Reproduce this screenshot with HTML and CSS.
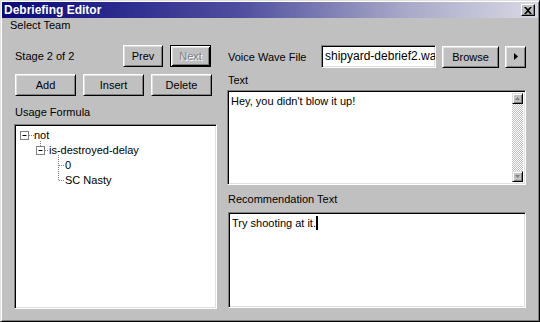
FILE: index.html
```html
<!DOCTYPE html>
<html lang="en">
<head>
    <meta charset="UTF-8">
    <title>Debriefing Editor</title>
    <link rel="stylesheet" href="styles.css">
</head>
<body>
    <div class="window">
        <div class="titlebar">
            <span class="title">Debriefing Editor</span>
            <span class="close">
                <svg width="8" height="7" viewBox="0 0 8 7"><path d="M0 0h2l2 2 2-2h2L5 3.5 8 7H6L4 5 2 7H0l3-3.5z" fill="#000"/></svg>
            </span>
        </div>
        <div class="menu"><span>Select Team</span></div>

        <div class="main">
            <div class="left">
                <div class="row stage">
                    <span class="stage-label">Stage 2 of 2</span>
                    <button class="btn prev">Prev</button>
                    <button class="btn next" disabled>Next</button>
                </div>
                <div class="row actions">
                    <button class="btn">Add</button>
                    <button class="btn">Insert</button>
                    <button class="btn">Delete</button>
                </div>
                <div class="label formula-label">Usage Formula</div>
                <div class="tree sunken">
                    <svg class="tree-lines" width="80" height="70">
                        <g stroke="#808080" stroke-dasharray="1 1" fill="none">
                            <path d="M12 8.5h5"/>
                            <path d="M23.5 14v5"/>
                            <path d="M28 23.5h4"/>
                            <path d="M41.5 28v26"/>
                            <path d="M42 38.5h5M42 53.5h5"/>
                        </g>
                        <rect x="3.5" y="4.5" width="8" height="8" fill="#fff" stroke="#808080"/>
                        <path d="M5.5 8.5h4" stroke="#000"/>
                        <rect x="19.5" y="19.5" width="8" height="8" fill="#fff" stroke="#808080"/>
                        <path d="M21.5 23.5h4" stroke="#000"/>
                    </svg>
                    <div class="node lvl0">not</div>
                    <div class="node lvl1">is-destroyed-delay</div>
                    <div class="node lvl2">0</div>
                    <div class="node lvl2">SC Nasty</div>
                </div>
            </div>

            <div class="right">
                <div class="row wave">
                    <span class="wave-label">Voice Wave File</span>
                    <div class="field sunken">shipyard-debrief2.wa</div>
                    <button class="btn browse">Browse</button>
                    <button class="btn play">
                        <svg width="4" height="7" viewBox="0 0 4 7"><path d="M0 0l4 3.5L0 7z" fill="#000"/></svg>
                    </button>
                </div>
                <div class="label text-label">Text</div>
                <div class="memo sunken">
                    <div class="memo-text">Hey, you didn't blow it up!</div>
                    <div class="scrollbar">
                        <span class="sb-btn">
                            <svg width="5" height="3" viewBox="0 0 5 3"><path d="M0 3l2.5-3L5 3z" fill="#808080"/></svg>
                        </span>
                        <span class="sb-track"></span>
                        <span class="sb-btn">
                            <svg width="5" height="3" viewBox="0 0 5 3"><path d="M0 0l2.5 3L5 0z" fill="#808080"/></svg>
                        </span>
                    </div>
                </div>
                <div class="label rec-label">Recommendation Text</div>
                <div class="memo rec sunken">
                    <div class="memo-text">Try shooting at it.<span class="caret"></span></div>
                </div>
            </div>
        </div>
    </div>
</body>
</html>
```

FILE: styles.css
```css
body {
    margin: 0;
    background: #c0c0c0;
    font-family: "Liberation Sans", Arial, sans-serif;
    font-size: 11px;
    color: #000;
}
.window {
    width: 540px;
    height: 322px;
    box-sizing: border-box;
    padding: 1px;
    border: 1px solid;
    border-color: #dfdfdf #000 #000 #dfdfdf;
    box-shadow: inset 1px 1px #fff, inset -1px -1px #808080;
    background: #c0c0c0;
}
.titlebar {
    height: 16px;
    display: flex;
    align-items: center;
    justify-content: space-between;
    padding: 0 3px 0 2px;
    background: linear-gradient(to right, #08087c, #5050a0 45%, #a8a8c8 75%, #d8d8e4);
}
.title {
    color: #fff;
    font-weight: bold;
    font-size: 12px;
}
.close {
    width: 14px;
    height: 12px;
    box-sizing: border-box;
    display: flex;
    align-items: center;
    justify-content: center;
    background: #c0c0c0;
    border: 1px solid;
    border-color: #fff #000 #000 #fff;
    box-shadow: inset -1px -1px #808080;
}
.menu {
    height: 14px;
    line-height: 14px;
    padding-left: 8px;
}
.main {
    display: flex;
    gap: 10px;
    padding: 13px 0 0 12px;
}
.left {
    width: 203px;
    display: flex;
    flex-direction: column;
}
.right {
    width: 299px;
    display: flex;
    flex-direction: column;
}
.row {
    display: flex;
    align-items: center;
}
.btn {
    font: inherit;
    color: #000;
    height: 22px;
    padding: 0;
    box-sizing: border-box;
    background: #c0c0c0;
    border: 1px solid;
    border-color: #fff #000 #000 #fff;
    box-shadow: inset 1px 1px #dfdfdf, inset -1px -1px #808080;
}
.stage {
    padding-left: 1px;
}
.stage-label {
    flex: 1;
}
.prev {
    width: 40px;
}
.next {
    width: 41px;
    margin: 0 6px 0 7px;
    color: #808080;
    text-shadow: 1px 1px #fff;
    border-color: #000;
    box-shadow: inset 1px 1px #fff, inset -1px -1px #000, inset 2px 2px #dfdfdf, inset -2px -2px #808080;
}
.actions {
    margin-top: 7px;
    padding-left: 1px;
    gap: 7px;
}
.actions .btn {
    width: 61px;
}
.label {
    height: 13px;
    line-height: 13px;
}
.formula-label {
    margin: 10px 0 5px 1px;
}
.sunken {
    box-sizing: border-box;
    background: #fff;
    border: 1px solid;
    border-color: #808080 #fff #fff #808080;
    box-shadow: inset 1px 1px #000, inset -1px -1px #dfdfdf;
}
.tree {
    position: relative;
    height: 185px;
    padding: 3px 2px;
}
.tree-lines {
    position: absolute;
    left: 2px;
    top: 2px;
}
.node {
    height: 15px;
    line-height: 15px;
    position: relative;
}
.lvl0 {
    padding-left: 17px;
}
.lvl1 {
    padding-left: 32px;
}
.lvl2 {
    padding-left: 48px;
}
.wave {
    height: 23px;
}
.wave-label {
    flex: 1;
    padding-left: 1px;
}
.field {
    width: 115px;
    height: 23px;
    line-height: 19px;
    padding: 1px 3px;
    font-size: 12px;
    white-space: nowrap;
    overflow: hidden;
}
.browse {
    width: 57px;
    margin: 0 6px;
}
.play {
    width: 21px;
    display: flex;
    align-items: center;
    justify-content: center;
}
.text-label {
    margin: 6px 0 3px 1px;
}
.memo {
    height: 95px;
    display: flex;
    padding: 2px;
}
.memo-text {
    flex: 1;
    padding: 1px 0 0 1px;
    font-size: 11px;
    line-height: 14px;
}
.scrollbar {
    width: 11px;
    display: flex;
    flex-direction: column;
}
.sb-btn {
    height: 11px;
    box-sizing: border-box;
    display: flex;
    align-items: center;
    justify-content: center;
    background: #c0c0c0;
    border: 1px solid;
    border-color: #dfdfdf #000 #000 #dfdfdf;
    box-shadow: inset 1px 1px #fff, inset -1px -1px #808080;
}
.sb-track {
    flex: 1;
    background: repeating-conic-gradient(#c0c0c0 0 25%, #fff 0 50%) 0 0 / 2px 2px;
}
.rec-label {
    margin: 8px 0 6px 1px;
}
.rec {
    margin-left: 1px;
    width: 298px;
    height: 96px;
}
.caret {
    display: inline-block;
    width: 2px;
    height: 14px;
    background: #000;
    vertical-align: top;
}
```
